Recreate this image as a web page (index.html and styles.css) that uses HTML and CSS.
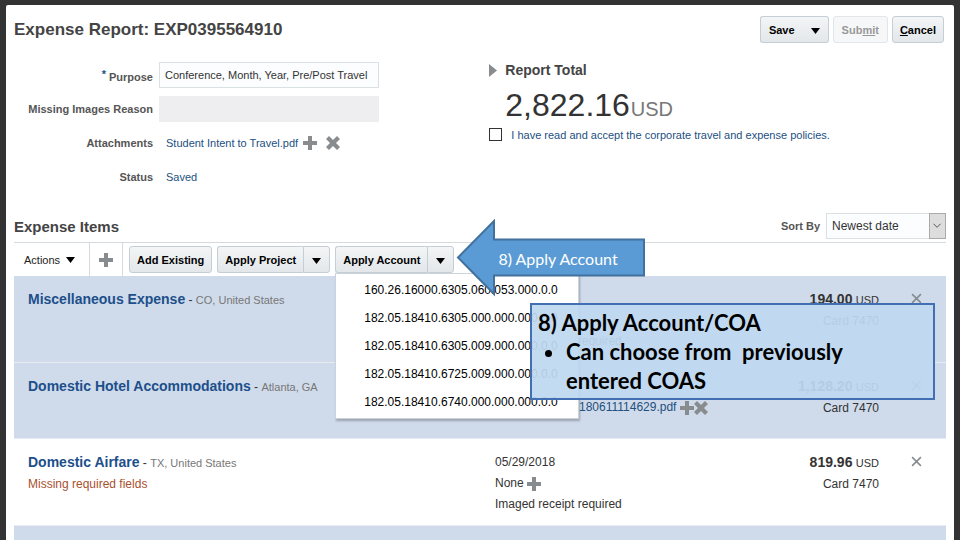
FILE: index.html
```html
<!DOCTYPE html>
<html lang="en">
<head>
  <meta charset="UTF-8">
  <title>Expense Report: EXP0395564910</title>
  <link rel="stylesheet" href="styles.css">
</head>
<body>

  <!-- shared icons -->
  <svg class="sprite" aria-hidden="true">
    <symbol id="plus" viewBox="0 0 14 14">
      <path d="M5 0h4v5h5v4H9v5H5V9H0V5h5z"/>
    </symbol>
    <symbol id="remove" viewBox="0 0 14 14">
      <path d="M3 0l4 4 4-4 3 3-4 4 4 4-3 3-4-4-4 4-3-3 4-4-4-4z"/>
    </symbol>
    <symbol id="close" viewBox="0 0 10 10">
      <path d="M1 1l8 8M9 1L1 9" fill="none" stroke="#858b90" stroke-width="1.4"/>
    </symbol>
    <symbol id="down" viewBox="0 0 9 6">
      <path d="M0 0h9L4.500 6z" fill="#000"/>
    </symbol>
  </svg>

  <main class="panel">
    <header class="page-header">
      <h1>Expense Report: EXP0395564910</h1>
      <div class="actions">
        <div class="split">
          <button type="button" class="btn save">Save</button>
          <button type="button" class="btn arrow" aria-label="More save options"><svg class="caret"><use href="#down"/></svg></button>
        </div>
        <button type="button" class="btn" disabled>Sub<u>mi</u>t</button>
        <button type="button" class="btn"><u>C</u>ancel</button>
      </div>
    </header>

    <section class="summary">
      <div class="fields">
        <label for="purpose"><span class="required">*</span> Purpose</label>
        <input type="text" id="purpose" value="Conference, Month, Year, Pre/Post Travel">

        <label for="reason">Missing Images Reason</label>
        <input type="text" id="reason" disabled>

        <span class="label">Attachments</span>
        <div class="value">
          <a href="#">Student Intent to Travel.pdf</a>
          <button type="button" class="icon-btn" aria-label="Add attachment"><svg class="icon"><use href="#plus"/></svg></button>
          <button type="button" class="icon-btn spaced" aria-label="Remove attachment"><svg class="icon"><use href="#remove"/></svg></button>
        </div>

        <span class="label">Status</span>
        <div class="value"><a href="#">Saved</a></div>
      </div>

      <div class="total">
        <h2>
          <svg class="expand" viewBox="0 0 8 13"><path d="M0 0l8 6.500L0 13z"/></svg>
          Report Total
        </h2>
        <p class="amount">2,822.16 <span>USD</span></p>
        <div class="accept">
          <input type="checkbox" id="accept">
          <label for="accept">I have read and accept the corporate travel and expense policies.</label>
        </div>
      </div>
    </section>

    <section class="items">
      <div class="items-header">
        <h2>Expense Items</h2>
        <div class="sort">
          <label for="sort">Sort By</label>
          <div class="select">
            <select id="sort">
              <option>Newest date</option>
            </select>
            <svg viewBox="0 0 17 25"><path d="M4 10l4 4 4-4"/></svg>
          </div>
        </div>
      </div>

      <div class="toolbar">
        <button type="button" class="plain">Actions <svg class="caret"><use href="#down"/></svg></button>
        <button type="button" class="plain add" aria-label="Add item"><svg class="icon"><use href="#plus"/></svg></button>
        <div class="tools">
          <button type="button" class="btn">Add Existing</button>
          <div class="split">
            <button type="button" class="btn">Apply Project</button>
            <button type="button" class="btn arrow divided" aria-label="Choose project"><svg class="caret"><use href="#down"/></svg></button>
          </div>
          <div class="split account">
            <button type="button" class="btn">Apply Account</button>
            <button type="button" class="btn arrow divided" aria-label="Choose account"><svg class="caret"><use href="#down"/></svg></button>
            <ul class="menu">
              <li><a href="#">160.26.16000.6305.060.053.000.0.0</a></li>
              <li><a href="#">182.05.18410.6305.000.000.000.0.0</a></li>
              <li><a href="#">182.05.18410.6305.009.000.000.0.0</a></li>
              <li><a href="#">182.05.18410.6725.009.000.000.0.0</a></li>
              <li><a href="#">182.05.18410.6740.000.000.000.0.0</a></li>
            </ul>
            <div class="pointer">
              <svg viewBox="0 0 190 78"><path d="M2 38.500L38 2v18.500h150v36H38V75z"/></svg>
              <span>8) Apply Account</span>
            </div>
          </div>
        </div>
      </div>

      <div class="list">
        <article class="item selected">
          <div>
            <p><a href="#" class="name">Miscellaneous Expense</a> - <span class="place">CO, United States</span></p>
          </div>
          <div class="detail">
            <p class="last">Imaged receipt required</p>
          </div>
          <div class="cost">
            <p><b>194.00</b> <small>USD</small></p>
            <p>Card 7470</p>
          </div>
          <button type="button" class="icon-btn delete" aria-label="Delete item"><svg><use href="#close"/></svg></button>
        </article>

        <article class="item selected">
          <div>
            <p><a href="#" class="name">Domestic Hotel Accommodations</a> - <span class="place">Atlanta, GA</span></p>
          </div>
          <div class="detail">
            <p class="receipt">
              <a href="#">180611114629.pdf</a>
              <button type="button" class="icon-btn" aria-label="Add receipt"><svg class="icon"><use href="#plus"/></svg></button>
              <button type="button" class="icon-btn" aria-label="Remove receipt"><svg class="icon"><use href="#remove"/></svg></button>
            </p>
          </div>
          <div class="cost">
            <p><b>1,128.20</b> <small>USD</small></p>
            <p>Card 7470</p>
          </div>
          <button type="button" class="icon-btn delete" aria-label="Delete item"><svg><use href="#close"/></svg></button>
        </article>

        <article class="item">
          <div>
            <p><a href="#" class="name">Domestic Airfare</a> - <span class="place">TX, United States</span></p>
            <p class="missing">Missing required fields</p>
          </div>
          <div class="detail">
            <p>05/29/2018</p>
            <p>None <button type="button" class="icon-btn" aria-label="Add receipt"><svg class="icon"><use href="#plus"/></svg></button></p>
            <p>Imaged receipt required</p>
          </div>
          <div class="cost">
            <p><b>819.96</b> <small>USD</small></p>
            <p>Card 7470</p>
          </div>
          <button type="button" class="icon-btn delete" aria-label="Delete item"><svg><use href="#close"/></svg></button>
        </article>

        <div class="rest"></div>

        <aside class="callout">
          <p>8) Apply Account/COA</p>
          <ul>
            <li>Can choose from &nbsp;previously entered COAS</li>
          </ul>
        </aside>
      </div>
    </section>
  </main>

</body>
</html>
```
FILE: styles.css
```css
* {
  margin: 0;
  padding: 0;
  box-sizing: border-box;
}

body {
  background-color: #333;
  font-family: "Liberation Sans", Arial, sans-serif;
  font-size: 11px;
  color: #333;
  padding: 5px 6px 0;
}

a {
  color: #23507f;
  text-decoration: none;
}

button, input, select {
  font-family: inherit;
}

.sprite {
  display: none;
}

.panel {
  background-color: #fff;
  border-radius: 2px 2px 0 0;
  min-height: calc(100vh - 5px);
  padding: 11px 8px 0;
  display: flex;
  flex-direction: column;
}

.page-header {
  display: flex;
  justify-content: space-between;
  align-items: center;
  padding-right: 2px;
}

h1 {
  font-size: 17px;
  color: #444;
}

h2 {
  font-size: 15px;
  color: #444;
}

.actions, .tools {
  display: flex;
  gap: 4px;
}

.btn {
  height: 27px;
  padding: 0 7px;
  border: 1px solid #c4ced7;
  border-radius: 3px;
  background: linear-gradient(#f3f5f6, #e3e7ea);
  font-size: 11px;
  font-weight: bold;
  color: #000;
  white-space: nowrap;
}

.btn:disabled {
  background: #f5f7f8;
  border-color: #e1e6ea;
  color: #999;
  padding: 0 8px;
}

.split {
  display: flex;
  position: relative;
}

.split .btn:first-child {
  border-right: none;
  border-radius: 3px 0 0 3px;
}

.split .arrow {
  border-left: none;
  border-radius: 0 3px 3px 0;
  padding: 0 8px;
}

.split .divided {
  border-left: 1px solid #c4ced7;
}

.btn.save {
  padding: 0 8px;
}

.caret {
  width: 9px;
  height: 6px;
}

.icon {
  width: 14px;
  height: 14px;
  fill: #888c8f;
  display: block;
}

.icon-btn {
  border: none;
  background: none;
  display: inline-block;
  vertical-align: middle;
}

.icon-btn.spaced {
  margin-left: 4px;
}

/* report details */
.summary {
  display: grid;
  grid-template-columns: 51% 1fr;
  padding-top: 19px;
}

.fields {
  display: grid;
  grid-template-columns: 139px 220px;
  grid-auto-rows: 26px;
  gap: 8px 6px;
  align-items: center;
}

.fields label, .fields .label, .sort label {
  font-size: 11px;
  font-weight: bold;
  color: #555;
  text-align: right;
}

.required {
  color: #23507f;
  vertical-align: 3px;
}

.fields input {
  height: 26px;
  padding: 0 5px;
  border: 1px solid #d9e1e5;
  background-color: #fcfdff;
  font-size: 11px;
  color: #333;
}

.fields input:disabled {
  background-color: #eeeef0;
  border-color: #eeeef0;
}

.value {
  display: flex;
  align-items: center;
  gap: 5px;
  padding-left: 7px;
}

.total h2 {
  display: flex;
  align-items: center;
  gap: 8px;
  font-size: 14px;
  line-height: 16px;
}

.expand {
  width: 8px;
  height: 13px;
  fill: #888c8f;
}

.amount {
  padding: 4px 0 0 16px;
  font-size: 32px;
  line-height: 46px;
  color: #333;
}

.amount span {
  font-size: 20px;
  line-height: 20px;
  margin-left: -8px;
  color: #777;
}

.accept {
  display: flex;
  align-items: center;
  gap: 9px;
  color: #23507f;
}

.accept input {
  appearance: none;
  width: 13px;
  height: 13px;
  border: 1px solid #333;
  background-color: #fff;
}

/* expense items */
.items {
  flex: 1;
  display: flex;
  flex-direction: column;
  padding-top: 23px;
}

.items-header, .sort {
  display: flex;
  align-items: center;
}

.items-header {
  justify-content: space-between;
  padding-bottom: 3px;
}

.sort {
  gap: 6px;
}

.select {
  position: relative;
}

.select select {
  appearance: none;
  display: block;
  width: 120px;
  height: 26px;
  padding: 0 5px;
  border: 1px solid #d9e1e5;
  border-radius: 0;
  background-color: #fcfdff;
  font-size: 12px;
  color: #333;
}

.select svg {
  position: absolute;
  top: 0;
  right: 0;
  width: 17px;
  height: 26px;
  border: 1px solid #aaa;
  background-color: #ddd;
  fill: none;
  stroke: #444;
  pointer-events: none;
}

.toolbar {
  display: flex;
  height: 34px;
  border-top: 1px solid #d5dade;
}

.plain {
  display: flex;
  align-items: center;
  gap: 6px;
  padding: 0 14px 0 10px;
  border: none;
  border-right: 1px solid #d5dade;
  background: none;
  font-size: 11px;
  color: #222;
}

.plain.add {
  padding: 0 9px;
}

.tools {
  gap: 5px;
  padding: 3px 0 0 6px;
}

.menu {
  position: absolute;
  z-index: 1;
  top: 27px;
  left: 0;
  width: 244px;
  padding: 2px 0;
  list-style: none;
  background-color: #fff;
  border: 1px solid #ccd3da;
  box-shadow: 1px 2px 2px rgba(0, 0, 0, 0.25);
}

.menu a {
  display: block;
  padding-left: 28px;
  font-size: 12px;
  line-height: 28px;
  color: #000;
}

.pointer {
  position: absolute;
  z-index: 2;
  top: -27px;
  left: calc(100% + 2px);
  width: 190px;
  height: 78px;
  display: flex;
  align-items: center;
  padding-left: 42px;
  font-family: Lato, sans-serif;
  font-size: 16px;
  color: #fff;
  white-space: nowrap;
}

.pointer svg {
  position: absolute;
  inset: 0;
  fill: #5b9bd5;
  stroke: #41719c;
  stroke-width: 2;
}

.pointer span {
  position: relative;
}

.list {
  position: relative;
  flex: 1;
  display: flex;
  flex-direction: column;
}

.item {
  display: grid;
  grid-template-columns: 467fr 222fr 162fr 43px;
  min-height: 76px;
  padding: 13px 24px 10px 14px;
  border-bottom: 1px solid #e6ecf2;
  font-size: 12px;
}

.item p {
  line-height: 20px;
  margin-bottom: 1px;
}

.selected, .rest {
  background-color: #cfdbea;
}

.rest {
  flex: 1;
  min-height: 15px;
}

.name {
  font-size: 14px;
  font-weight: bold;
  color: #1d4f8b;
}

.place, .cost small {
  font-size: 11px;
}

.place {
  color: #777;
}

.missing {
  color: #a9502f;
}

.detail .last {
  padding-top: 42px;
}

.detail .receipt {
  padding: 21px 0 0 84px;
  white-space: nowrap;
}

.receipt .icon-btn + .icon-btn {
  margin-left: -3px;
}

.cost {
  text-align: right;
}

.cost b {
  font-size: 14px;
}

.delete {
  justify-self: end;
  align-self: start;
  padding-top: 4px;
}

.delete svg {
  display: block;
  width: 11px;
  height: 11px;
}

.callout {
  position: absolute;
  z-index: 3;
  top: 27px;
  right: 11px;
  width: 405px;
  padding: 3px 6px;
  border: 2px solid #426fb3;
  background-color: rgba(190, 216, 240, 0.93);
  font-family: Lato, sans-serif;
  font-size: 22px;
  font-weight: bold;
  line-height: 29px;
  color: #000;
}

.callout ul {
  padding: 0 60px 0 28px;
}
```
